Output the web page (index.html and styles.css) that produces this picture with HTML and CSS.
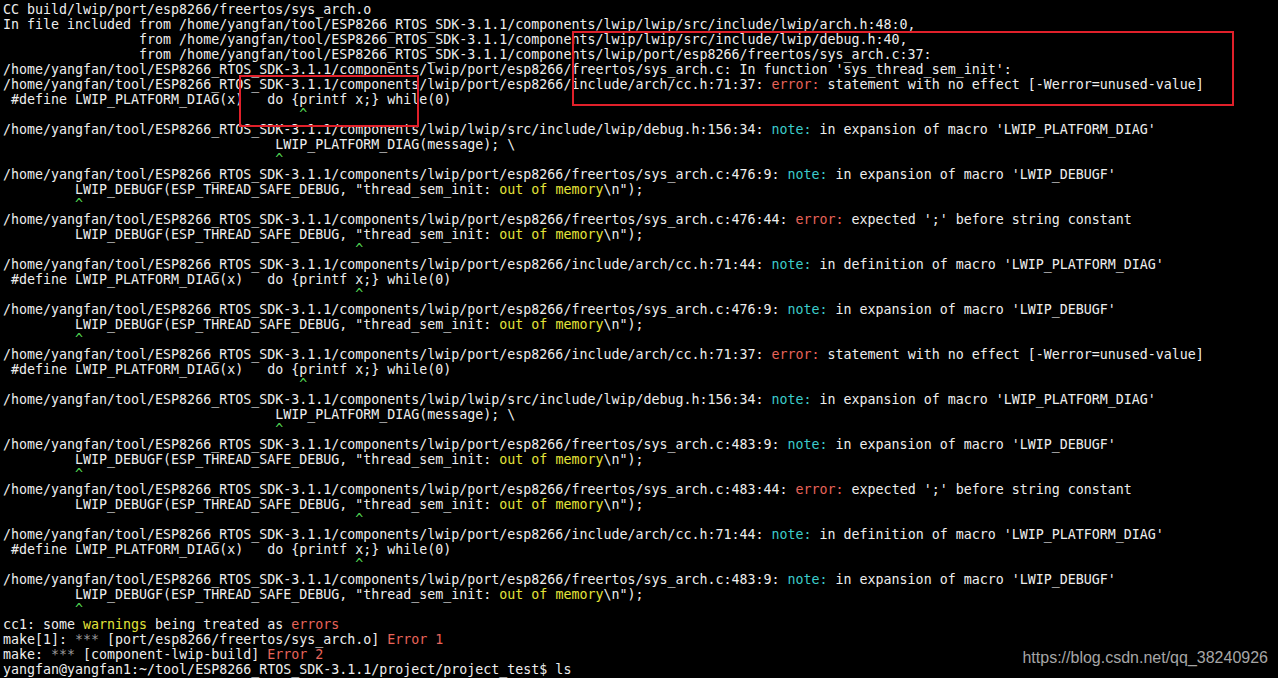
FILE: index.html
```html
<!DOCTYPE html>
<html lang="en">
<head>
<meta charset="UTF-8" />
<meta name="viewport" content="width=device-width, initial-scale=1" />
<title>make – sys_arch.o</title>
<link rel="stylesheet" href="styles.css">
</head>
<body>

<div class="terminal">
<pre class="log">CC build/lwip/port/esp8266/freertos/sys_arch.o
In file included from /home/yangfan/tool/ESP8266_RTOS_SDK-3.1.1/components/lwip/lwip/src/include/lwip/arch.h:48:0,
                 from /home/yangfan/tool/ESP8266_RTOS_SDK-3.1.1/components/lwip/lwip/src/include/lwip/debug.h:40,
                 from /home/yangfan/tool/ESP8266_RTOS_SDK-3.1.1/components/lwip/port/esp8266/freertos/sys_arch.c:37:
/home/yangfan/tool/ESP8266_RTOS_SDK-3.1.1/components/lwip/port/esp8266/freertos/sys_arch.c: In function 'sys_thread_sem_init':
/home/yangfan/tool/ESP8266_RTOS_SDK-3.1.1/components/lwip/port/esp8266/include/arch/cc.h:71:37: <span class="err">error:</span> statement with no effect [-Werror=unused-value]
 #define LWIP_PLATFORM_DIAG(x)   do {printf x;} while(0)
                                     <span class="caret">^</span>
/home/yangfan/tool/ESP8266_RTOS_SDK-3.1.1/components/lwip/lwip/src/include/lwip/debug.h:156:34: <span class="note">note:</span> in expansion of macro 'LWIP_PLATFORM_DIAG'
                                  LWIP_PLATFORM_DIAG(message); \
                                  <span class="caret">^</span>
/home/yangfan/tool/ESP8266_RTOS_SDK-3.1.1/components/lwip/port/esp8266/freertos/sys_arch.c:476:9: <span class="note">note:</span> in expansion of macro 'LWIP_DEBUGF'
         LWIP_DEBUGF(ESP_THREAD_SAFE_DEBUG, "thread_sem_init: <span class="hl">out of memory</span>\n");
         <span class="caret">^</span>
/home/yangfan/tool/ESP8266_RTOS_SDK-3.1.1/components/lwip/port/esp8266/freertos/sys_arch.c:476:44: <span class="err">error:</span> expected ';' before string constant
         LWIP_DEBUGF(ESP_THREAD_SAFE_DEBUG, "thread_sem_init: <span class="hl">out of memory</span>\n");
                                            <span class="caret">^</span>
/home/yangfan/tool/ESP8266_RTOS_SDK-3.1.1/components/lwip/port/esp8266/include/arch/cc.h:71:44: <span class="note">note:</span> in definition of macro 'LWIP_PLATFORM_DIAG'
 #define LWIP_PLATFORM_DIAG(x)   do {printf x;} while(0)
                                            <span class="caret">^</span>
/home/yangfan/tool/ESP8266_RTOS_SDK-3.1.1/components/lwip/port/esp8266/freertos/sys_arch.c:476:9: <span class="note">note:</span> in expansion of macro 'LWIP_DEBUGF'
         LWIP_DEBUGF(ESP_THREAD_SAFE_DEBUG, "thread_sem_init: <span class="hl">out of memory</span>\n");
         <span class="caret">^</span>
/home/yangfan/tool/ESP8266_RTOS_SDK-3.1.1/components/lwip/port/esp8266/include/arch/cc.h:71:37: <span class="err">error:</span> statement with no effect [-Werror=unused-value]
 #define LWIP_PLATFORM_DIAG(x)   do {printf x;} while(0)
                                     <span class="caret">^</span>
/home/yangfan/tool/ESP8266_RTOS_SDK-3.1.1/components/lwip/lwip/src/include/lwip/debug.h:156:34: <span class="note">note:</span> in expansion of macro 'LWIP_PLATFORM_DIAG'
                                  LWIP_PLATFORM_DIAG(message); \
                                  <span class="caret">^</span>
/home/yangfan/tool/ESP8266_RTOS_SDK-3.1.1/components/lwip/port/esp8266/freertos/sys_arch.c:483:9: <span class="note">note:</span> in expansion of macro 'LWIP_DEBUGF'
         LWIP_DEBUGF(ESP_THREAD_SAFE_DEBUG, "thread_sem_init: <span class="hl">out of memory</span>\n");
         <span class="caret">^</span>
/home/yangfan/tool/ESP8266_RTOS_SDK-3.1.1/components/lwip/port/esp8266/freertos/sys_arch.c:483:44: <span class="err">error:</span> expected ';' before string constant
         LWIP_DEBUGF(ESP_THREAD_SAFE_DEBUG, "thread_sem_init: <span class="hl">out of memory</span>\n");
                                            <span class="caret">^</span>
/home/yangfan/tool/ESP8266_RTOS_SDK-3.1.1/components/lwip/port/esp8266/include/arch/cc.h:71:44: <span class="note">note:</span> in definition of macro 'LWIP_PLATFORM_DIAG'
 #define LWIP_PLATFORM_DIAG(x)   do {printf x;} while(0)
                                            <span class="caret">^</span>
/home/yangfan/tool/ESP8266_RTOS_SDK-3.1.1/components/lwip/port/esp8266/freertos/sys_arch.c:483:9: <span class="note">note:</span> in expansion of macro 'LWIP_DEBUGF'
         LWIP_DEBUGF(ESP_THREAD_SAFE_DEBUG, "thread_sem_init: <span class="hl">out of memory</span>\n");
         <span class="caret">^</span>
cc1: some <span class="hl">warnings</span> being treated as <span class="err">errors</span>
make[1]: <span class="dim">***</span> [port/esp8266/freertos/sys_arch.o] <span class="err">Error 1</span>
make: <span class="dim">***</span> [component-lwip-build] <span class="err">Error 2</span>
yangfan@yangfan1:~/tool/ESP8266_RTOS_SDK-3.1.1/project/project_test$ ls</pre>

  <!-- annotation boxes drawn over the screenshot -->
  <div class="mark mark-path"></div>
  <div class="mark mark-macro"></div>

  <div class="watermark">https://blog.csdn.net/qq_38240926</div>
</div>

</body>
</html>
```

FILE: styles.css
```css
html, body { margin: 0; padding: 0; background: #000; }
body { width: 1278px; height: 678px; overflow: hidden; }

.terminal {
  position: relative;
  width: 1278px;
  height: 678px;
  background: #000;
}

.log {
  margin: 0;
  padding: 2px 0 0 3px;
  font-family: "DejaVu Sans Mono", "Liberation Mono", monospace;
  font-size: 13.3px;
  line-height: 15px;
  color: #eeeeee;
  white-space: pre;
}

.err { color: #e8645a; }
.note { color: #3ccccc; }
.hl { color: #e4e43a; }
.caret { color: #52d452; }
.dim { color: #9a9a9a; }

.mark {
  position: absolute;
  border: 2px solid #e0202a;
  box-sizing: border-box;
}
.mark-path {
  left: 572px;
  top: 31px;
  width: 662px;
  height: 75px;
}
.mark-macro {
  left: 239px;
  top: 75px;
  width: 180px;
  height: 52px;
}

.watermark {
  position: absolute;
  right: 10px;
  top: 649px;
  font-family: "Liberation Sans", Arial, sans-serif;
  font-size: 16px;
  color: #a6a6a6;
}
```
